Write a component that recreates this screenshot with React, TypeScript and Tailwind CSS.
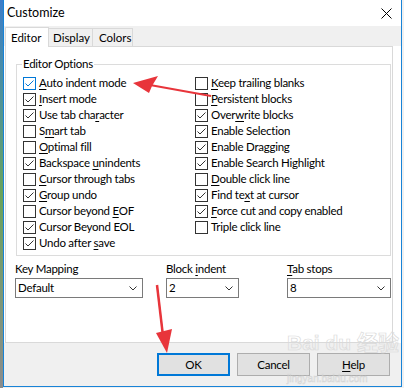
import React from 'react'

type Opt = { pre: string; key?: string; post?: string; checked: boolean; focus?: boolean }

const leftOpts: Opt[] = [
  { pre: '', key: 'A', post: 'uto indent mode', checked: true, focus: true },
  { pre: '', key: 'I', post: 'nsert mode', checked: true },
  { pre: 'Use tab cha', key: 'r', post: 'acter', checked: true },
  { pre: 'S', key: 'm', post: 'art tab', checked: false },
  { pre: '', key: 'O', post: 'ptimal fill', checked: false },
  { pre: 'Backspace ', key: 'u', post: 'nindents', checked: true },
  { pre: '', key: 'C', post: 'ursor through tabs', checked: false },
  { pre: '', key: 'G', post: 'roup undo', checked: true },
  { pre: 'Cursor beyond ', key: 'E', post: 'OF', checked: false },
  { pre: 'Cursor Beyond EOL', checked: true },
  { pre: 'Undo after ', key: 's', post: 'ave', checked: true },
]

const rightOpts: Opt[] = [
  { pre: '', key: 'K', post: 'eep trailing blanks', checked: false },
  { pre: '', key: 'P', post: 'ersistent blocks', checked: false },
  { pre: 'Over', key: 'w', post: 'rite blocks', checked: true },
  { pre: 'Enable Selection', checked: true },
  { pre: 'Enable Dragging', checked: true },
  { pre: 'Enable Search Highlight', checked: true },
  { pre: '', key: 'D', post: 'ouble click line', checked: false },
  { pre: 'Find te', key: 'x', post: 't at cursor', checked: true },
  { pre: '', key: 'F', post: 'orce cut and copy enabled', checked: true },
  { pre: 'Triple click line', checked: false },
]

function Box({ checked, focus }: { checked: boolean; focus?: boolean }) {
  return (
    <span
      className={`w-[13px] h-[13px] shrink-0 border bg-white flex items-center justify-center ${
        focus ? 'border-[#0078d7]' : 'border-[#333333]'
      }`}
    >
      {checked && (
        <svg width="11" height="11" viewBox="0 0 11 11">
          <polyline
            points="1.5,5.5 4,8 9.5,2.5"
            fill="none"
            stroke={focus ? '#0078d7' : '#333333'}
            strokeWidth="1"
          />
        </svg>
      )}
    </span>
  )
}

function Row({ o }: { o: Opt }) {
  return (
    <div className="h-[16px] flex items-center gap-[3px] whitespace-nowrap">
      <Box checked={o.checked} focus={o.focus} />
      <span>
        {o.pre}
        {o.key && <u className="underline-offset-2">{o.key}</u>}
        {o.post}
      </span>
    </div>
  )
}

function Chevron() {
  return (
    <svg width="8" height="5" viewBox="0 0 8 5" className="shrink-0">
      <polyline points="0.5,0.5 4,4 7.5,0.5" fill="none" stroke="#333333" strokeWidth="1" />
    </svg>
  )
}

function Select({ value, width }: { value: string; width: string }) {
  return (
    <div className={`${width} h-[20px] border border-[#7a7a7a] bg-white flex items-center justify-between pl-[2px] pr-[5px]`}>
      <span>{value}</span>
      <Chevron />
    </div>
  )
}

export default function App() {
  return (
    <div className="w-[404px] h-[388px] relative overflow-hidden flex bg-[#f0f0f0] text-[11.5px] tracking-[-0.25px] leading-[16px] text-black font-['Lato','Noto_Sans',sans-serif]">
      {/* background app peeking out on the left */}
      <div className="w-[3px] h-full bg-gradient-to-b from-[#3d7cc9] via-[#6aa35a] to-[#8c8c8c]" />

      {/* dialog window */}
      <div className="w-[399px] h-[387px] border-x border-b border-[#1883d7] flex flex-col bg-white">
        {/* title bar */}
        <div className="h-[26px] shrink-0 flex items-center justify-between pl-[3px] pr-[9px]">
          <span className="text-[12.5px] tracking-normal">Customize</span>
          <svg width="11" height="11" viewBox="0 0 11 11">
            <path d="M0.5 0.5 L10.5 10.5 M10.5 0.5 L0.5 10.5" stroke="#000" strokeWidth="1" />
          </svg>
        </div>

        {/* tabs */}
        <div className="h-[20px] shrink-0 bg-[#f0f0f0] flex items-end pl-[1px] relative z-10 tracking-normal">
          <div className="w-[44px] h-[20px] -mb-[1px] bg-white border-x border-t border-[#d9d9d9] pl-[5px] flex items-center">
            Editor
          </div>
          <div className="w-[44px] h-[18px] border-r border-t border-[#d9d9d9] pl-[4px] flex items-center">
            Display
          </div>
          <div className="w-[40px] h-[18px] border-r border-t border-[#d9d9d9] pl-[6px] flex items-center">
            Colors
          </div>
        </div>

        {/* tab page */}
        <div className="h-[297px] shrink-0 flex bg-white">
          <div className="ml-[1px] w-[388px] h-full border border-[#d9d9d9] bg-white flex flex-col">
            <fieldset className="ml-[10px] mt-[9px] w-[375px] border border-[#dcdcdc] px-[6px] pb-[4px]">
              <legend className="px-[1px] -ml-[1px]">Editor Options</legend>
              <div className="pt-[3px] grid grid-cols-[172px_1fr]">
                <div className="flex flex-col">
                  {leftOpts.map((o, i) => (
                    <Row key={i} o={o} />
                  ))}
                </div>
                <div className="flex flex-col">
                  {rightOpts.map((o, i) => (
                    <Row key={i} o={o} />
                  ))}
                </div>
              </div>
            </fieldset>

            <div className="mt-[5px] ml-[9px] flex">
              <div className="w-[128px] flex flex-col gap-[1px]">
                <span>Key Mapping</span>
                <Select value="Default" width="w-[128px]" />
              </div>
              <div className="ml-[23px] w-[73px] flex flex-col gap-[1px]">
                <span>
                  Block <u className="underline-offset-2">i</u>ndent
                </span>
                <Select value="2" width="w-[73px]" />
              </div>
              <div className="ml-[48px] w-[104px] flex flex-col gap-[1px]">
                <span>
                  <u className="underline-offset-2">T</u>ab stops
                </span>
                <Select value="8" width="w-[104px]" />
              </div>
            </div>
          </div>
        </div>

        {/* buttons */}
        <div className="flex-1 bg-[#f0f0f0] flex justify-end items-start pt-[10px] pr-[11px] gap-[7px]">
          <button className="w-[73px] h-[23px] border-2 border-[#0078d7] bg-[#e1e1e1]">OK</button>
          <button className="w-[73px] h-[23px] border border-[#adadad] bg-[#e1e1e1]">Cancel</button>
          <button className="w-[73px] h-[23px] border border-[#adadad] bg-[#e1e1e1]">
            <u className="underline-offset-2">H</u>elp
          </button>
        </div>
      </div>

      {/* watermark */}
      <div className="absolute left-[287px] top-[331px] pointer-events-none text-transparent tracking-normal [-webkit-text-stroke:0.7px_#dadada] font-['Liberation_Sans','Noto_Sans_CJK_SC',sans-serif]">
        <div className="text-[21px] leading-[24px] font-bold">Bai du 经验</div>
        <div className="text-[10px] leading-[10px] mt-[19px] [-webkit-text-stroke:0.5px_#d5d5d5]">jingyan.baidu.com</div>
      </div>

      {/* red annotation arrows */}
      <svg className="absolute inset-0 pointer-events-none" width="404" height="388" viewBox="0 0 404 388">
        <line x1="150" y1="85" x2="211" y2="96" stroke="#e8353b" strokeWidth="2" />
        <polygon points="133,83 158,76 152,86 149,93" fill="#e8353b" />
        <line x1="157" y1="285" x2="163" y2="336" stroke="#e8353b" strokeWidth="2.5" />
        <polygon points="156,333 172,329 167,353" fill="#e8353b" />
      </svg>
    </div>
  )
}
